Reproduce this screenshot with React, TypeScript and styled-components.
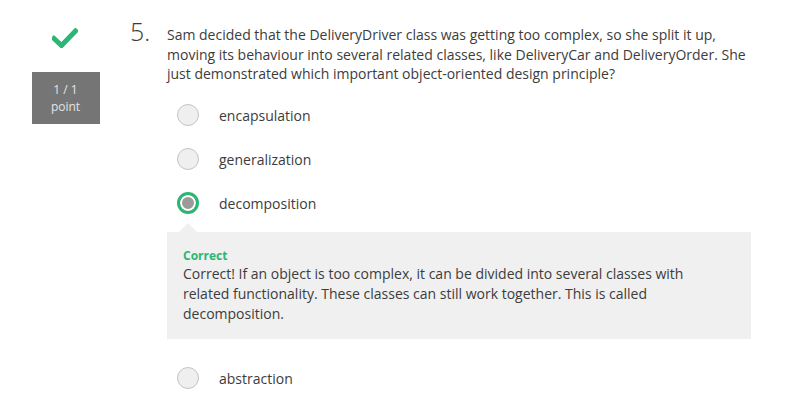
import React from 'react'
import styled, { createGlobalStyle } from 'styled-components'

const GlobalStyle = createGlobalStyle`
    html, body {
        margin: 0;
        padding: 0;
        background: #ffffff;
    }
    body {
        font-family: "Open Sans", "Liberation Sans", sans-serif;
        color: #3c3c3c;
    }
`

const Page = styled.div`
    display: flex;
    width: 785px;
    height: 410px;
    overflow: hidden;
`

const Status = styled.div`
    width: 130px;
    display: flex;
    flex-direction: column;
    align-items: center;
    padding-top: 28px;
    box-sizing: border-box;
`

const Check = styled.svg`
    width: 26px;
    height: 20px;
    display: block;
`

const Score = styled.div`
    margin-top: 24px;
    width: 68px;
    height: 52px;
    background: #757575;
    color: #e4e4e4;
    font-size: 12px;
    line-height: 17px;
    display: flex;
    flex-direction: column;
    align-items: center;
    justify-content: center;
    margin-left: 1px;
`

const Number = styled.div`
    width: 37px;
    padding-top: 16px;
    font-size: 25px;
    font-weight: 300;
    line-height: 30px;
    color: #3c3c3c;
`

const Body = styled.div`
    width: 584px;
    padding-top: 25px;
`

const Question = styled.p`
    margin: 0 0 9.5px;
    font-size: 14px;
    line-height: 19.5px;
`

const Option = styled.div`
    display: flex;
    align-items: center;
    height: 44px;
    padding-left: 10px;
    font-size: 14px;
`

const Radio = styled.span<{ $checked?: boolean }>`
    box-sizing: border-box;
    width: 22px;
    height: 22px;
    border-radius: 50%;
    margin-right: 20px;
    border: ${p => (p.$checked ? '3px solid #2bb673' : '1px solid #c4c4c4')};
    background: ${p => (p.$checked ? '#9a9a9a' : '#efefef')};
    box-shadow: ${p => (p.$checked ? 'inset 0 0 0 2px #ffffff' : 'none')};
`

const Feedback = styled.div`
    position: relative;
    margin-top: 7px;
    margin-bottom: 17px;
    background: #f0f0f0;
    padding: 16px 16px 15px;
    &::before {
        content: '';
        position: absolute;
        top: -9px;
        left: 12px;
        border-left: 9px solid transparent;
        border-right: 9px solid transparent;
        border-bottom: 9px solid #f0f0f0;
    }
`

const FeedbackTitle = styled.div`
    color: #2bb673;
    font-size: 12px;
    font-weight: 700;
    line-height: 16px;
`

const FeedbackText = styled.div`
    font-size: 14px;
    line-height: 20px;
    padding-right: 40px;
`

const App = () => {
    return (
        <Page>
            <GlobalStyle />
            <Status>
                <Check viewBox="0 0 26 20">
                    <path d="M2 10.5 L9.5 17.5 L23.5 3" fill="none" stroke="#2bb673" strokeWidth="5" strokeLinecap="square" />
                </Check>
                <Score>
                    <span>1 / 1</span>
                    <span>point</span>
                </Score>
            </Status>
            <Number>5.</Number>
            <Body>
                <Question>
                    Sam decided that the DeliveryDriver class was getting too complex, so she split it up, moving its
                    behaviour into several related classes, like DeliveryCar and DeliveryOrder. She just demonstrated
                    which important object-oriented design principle?
                </Question>
                <Option><Radio />encapsulation</Option>
                <Option><Radio />generalization</Option>
                <Option><Radio $checked />decomposition</Option>
                <Feedback>
                    <FeedbackTitle>Correct</FeedbackTitle>
                    <FeedbackText>
                        Correct! If an object is too complex, it can be divided into several classes with related
                        functionality. These classes can still work together. This is called decomposition.
                    </FeedbackText>
                </Feedback>
                <Option><Radio />abstraction</Option>
            </Body>
        </Page>
    )
}

export default App
